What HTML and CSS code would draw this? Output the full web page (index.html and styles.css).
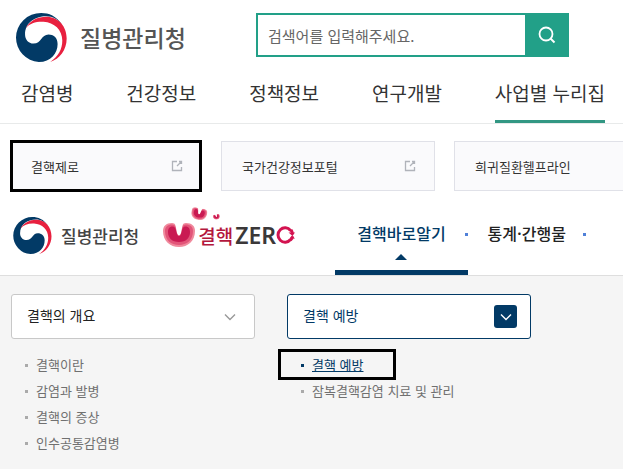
FILE: index.html
```html
<!DOCTYPE html>
<html lang="ko">
<head>
<meta charset="utf-8">
<meta name="viewport" content="width=device-width, initial-scale=1">
<title>질병관리청 결핵제로</title>
<link rel="stylesheet" href="styles.css">
</head>
<body>
<svg class="defs" aria-hidden="true">
  <symbol id="emblem" viewBox="0 0 152 146">
    <path fill="#023a66" d="M138 36C120 8 98 0 75 0A75 73 0 0 0 0 73A73 73 0 0 0 68 146C104 146 124 120 124 92C124 73 111 64 97 64C75 64 76 91 52 91C37 91 27 79 27 64C27 30 56 10 90 10C110 10 125 20 138 36Z"/>
    <path fill="#e8203f" d="M28 46C42 22 65 11 90 11C127 11 151 40 151 76C151 110 130 137 102 146C126 130 138 108 138 82C138 50 114 28 82 26C60 25 42 30 28 46Z"/>
  </symbol>
  <symbol id="lungs" viewBox="0 0 32 24">
    <path fill="#f08a9d" d="M9 0C3 0 0 3 0 8C0 18 7 24 16 24C25 24 32 18 32 8C32 3 29 0 23 0C19 0 17.500 5 17.500 10C17.500 13 14.500 13 14.500 10C14.500 5 13 0 9 0Z"/>
    <path fill="#e25579" d="M9 1.500C4.500 1.500 2 4 2 8C2 17 8 22 16 22C24 22 30 17 30 8C30 4 27.500 1.500 23 1.500C19 1.500 18 6 17.500 11C17 14 15 14 14.500 11C14 6 13 1.500 9 1.500Z"/>
    <path fill="#c91a52" d="M9.500 3.500C6 3.500 5 6 5 9C5 15 9 19 16 19C23 19 27 15 27 9C27 6 26 3.500 22.500 3.500C20 3.500 19 6 18 11C17.500 13.500 14.500 13.500 14 11C13 6 12 3.500 9.500 3.500Z"/>
    <path fill="#fff" d="M12 0H20L18 10Q16 14 14 10Z"/>
  </symbol>
  <symbol id="external" viewBox="0 0 12 12">
    <path fill="none" stroke="#b0b3ba" stroke-width="1.300" d="M6 1.500H1.500V10.500H10.500V7M8 1.500H10.500V4M10.500 1.500L6 6"/>
  </symbol>
  <symbol id="chevron" viewBox="0 0 12 8">
    <path fill="none" stroke="currentColor" stroke-width="1.400" d="M1 1.500L6 6.500L11 1.500"/>
  </symbol>
</svg>

<header class="site-header">
  <div class="site-top">
    <a class="site-logo" href="#"><svg class="site-emblem" aria-hidden="true"><use href="#emblem"/></svg><span>질병관리청</span></a>
    <form class="search" role="search">
      <input class="search-input" type="search" aria-label="검색어" placeholder="검색어를 입력해주세요.">
      <button class="search-button" type="button" aria-label="검색">
        <svg width="18" height="18" viewBox="0 0 18 18" aria-hidden="true"><circle cx="8" cy="8" r="6.500" fill="none" stroke="#fff" stroke-width="1.800"/><path d="M12.500 12.500L16.500 16.500" stroke="#fff" stroke-width="2"/></svg>
      </button>
    </form>
  </div>
  <nav class="site-nav">
    <a href="#">감염병</a>
    <a href="#">건강정보</a>
    <a href="#">정책정보</a>
    <a href="#">연구개발</a>
    <a class="current" href="#">사업별 누리집</a>
  </nav>
</header>

<section class="portals">
  <a class="portal marked" href="#">결핵제로<svg class="external" aria-hidden="true"><use href="#external"/></svg></a>
  <a class="portal" href="#">국가건강정보포털<svg class="external" aria-hidden="true"><use href="#external"/></svg></a>
  <a class="portal trailing" href="#">희귀질환헬프라인</a>
</section>

<header class="tb-header">
  <a class="tb-agency" href="#"><svg class="tb-emblem" aria-hidden="true"><use href="#emblem"/></svg><span>질병관리청</span></a>
  <a class="tb-logo" href="#">
    <svg class="lungs" aria-hidden="true"><use href="#lungs"/></svg>
    <svg class="lungs-small" viewBox="0 0 30 14" aria-hidden="true"><use href="#lungs" width="16" height="12" transform="rotate(12 8 6)"/><use href="#lungs" x="22" y="6" width="7" height="6" transform="rotate(-12 25 9)"/></svg>
    <span class="tb-name">결핵</span><span class="tb-zero">ZER</span>
    <svg class="tb-o" viewBox="0 0 19 18" aria-label="O" role="img"><path fill="none" stroke="#d31350" stroke-width="3" d="M14.500 4.500A7 7.200 0 1 0 14.500 13.500M15 4Q16.500 6 16.500 8M16.500 10.500Q16.500 12.500 14.500 14"/><path fill="#d31350" d="M12.500 6.500H19L16.500 10ZM13.500 12.500L16 9.500L19 12.500Z"/></svg>
  </a>
  <nav class="tb-nav">
    <a class="current" href="#">결핵바로알기</a>
    <a href="#">통계·간행물</a>
  </nav>
</header>

<main class="topics">
  <section class="topic">
    <button class="topic-toggle" type="button" aria-expanded="true"><span class="toggle-label">결핵의 개요</span><span class="toggle-icon"><svg width="12" height="8" aria-hidden="true"><use href="#chevron"/></svg></span></button>
    <ul class="topic-list">
      <li><a href="#">결핵이란</a></li>
      <li><a href="#">감염과 발병</a></li>
      <li><a href="#">결핵의 증상</a></li>
      <li><a href="#">인수공통감염병</a></li>
    </ul>
  </section>
  <section class="topic active">
    <button class="topic-toggle" type="button" aria-expanded="true"><span class="toggle-label">결핵 예방</span><span class="toggle-icon"><svg width="12" height="8" aria-hidden="true"><use href="#chevron"/></svg></span></button>
    <ul class="topic-list">
      <li class="selected"><a href="#">결핵 예방</a></li>
      <li><a href="#">잠복결핵감염 치료 및 관리</a></li>
    </ul>
  </section>
</main>
</body>
</html>
```
FILE: styles.css
```css
*,
*::before,
*::after {
  box-sizing: border-box;
}

body {
  margin: 0;
  min-height: 100vh;
  display: flex;
  flex-direction: column;
  background: #fff;
  color: #333;
  font-family: "Noto Sans CJK KR", sans-serif;
}

a {
  color: inherit;
  text-decoration: none;
}

svg {
  flex: none;
}

.defs {
  position: absolute;
  width: 0;
  height: 0;
}

/* Agency header */
.site-header {
  border-bottom: 1px solid #e8eaea;
}

.site-top {
  display: flex;
  justify-content: space-between;
  align-items: flex-start;
  padding: 13px 54px 0 16px;
}

.site-logo {
  display: flex;
  align-items: center;
  gap: 13px;
  color: #555;
  font-size: 23px;
  font-weight: 500;
  line-height: 49px;
}

.site-emblem {
  width: 51px;
  height: 49px;
}

.search {
  display: flex;
  width: 313px;
  height: 44px;
  border: 2px solid #22a088;
}

.search-input {
  flex: 1;
  min-width: 0;
  padding: 0 10px;
  border: 0;
  background: #fff;
  color: #333;
  font: 15px "Noto Sans CJK KR", sans-serif;
}

.search-input::placeholder {
  color: #666;
}

.search-button {
  display: flex;
  align-items: center;
  justify-content: center;
  width: 42px;
  padding: 0 0 0 2px;
  border: 0;
  background: #22a088;
}

.site-nav {
  display: flex;
  justify-content: space-between;
  padding: 0 18px 0 21px;
}

.site-nav a {
  padding: 17px 0 13px;
  border-bottom: 3px solid transparent;
  font-size: 19px;
  line-height: 28px;
  white-space: nowrap;
}

.site-nav .current {
  border-color: #329783;
}

/* Linked portals */
.portals {
  display: flex;
  align-items: center;
  gap: 19px;
  padding: 16px 0 0 10px;
}

.portal {
  display: flex;
  flex: none;
  align-items: center;
  justify-content: space-between;
  width: 214px;
  height: 50px;
  padding: 0 18px 0 20px;
  border: 1px solid #e0e1e8;
  background: #fafafc;
  color: #333;
  font-size: 13px;
}

.portal.marked {
  width: 192px;
  height: 52px;
  padding: 0 16px 0 18px;
  border: 3px solid #000;
}

.portal.trailing {
  flex: 1;
  width: auto;
  border-right: 0;
}

.external {
  width: 12px;
  height: 12px;
}

/* Tuberculosis site header */
.tb-header {
  display: flex;
  height: 84px;
  padding-left: 13px;
  border-bottom: 1px solid #dedede;
}

.tb-agency,
.tb-logo {
  display: flex;
  align-items: center;
  height: 86px;
  white-space: nowrap;
}

.tb-agency {
  gap: 9px;
  color: #444;
  font-size: 17px;
  font-weight: 500;
}

.tb-emblem {
  width: 39px;
  height: 37px;
}

.tb-logo {
  position: relative;
  margin-left: 24px;
}

.lungs {
  width: 32px;
  height: 24px;
  margin-right: 3px;
}

.lungs-small {
  position: absolute;
  top: 16px;
  left: 28px;
  width: 30px;
  height: 14px;
  overflow: visible;
}

.tb-name {
  margin-right: 2px;
  color: #b3173d;
  font-size: 19px;
  font-weight: 500;
}

.tb-zero {
  color: #3b3839;
  font-family: "Noto Sans", sans-serif;
  font-size: 23px;
  font-weight: 600;
}

.tb-o {
  width: 19px;
  height: 18px;
}

.tb-nav {
  display: flex;
  margin-left: auto;
  padding-right: 37px;
}

.tb-nav a {
  position: relative;
  display: flex;
  justify-content: center;
  padding: 0 20px;
  color: #222;
  font-size: 16px;
  font-weight: 500;
  line-height: 82px;
  white-space: nowrap;
}

.tb-nav a::after {
  content: "";
  position: absolute;
  top: 41px;
  right: 0;
  width: 3px;
  height: 3px;
  background: #5080d8;
}

.tb-nav .current {
  padding: 0 22px;
  border-bottom: 5px solid #023a66;
  color: #023a66;
}

.tb-nav .current::before {
  content: "";
  position: absolute;
  top: 62px;
  border: 6px solid transparent;
  border-top: 0;
  border-bottom-color: #023a66;
}

/* Topic menus */
.topics {
  display: flex;
  flex: 1;
  align-items: flex-start;
  gap: 32px;
  padding: 18px 11px;
  background: #f5f5f5;
}

.topic {
  width: 244px;
}

.topic-toggle {
  display: flex;
  align-items: center;
  justify-content: space-between;
  width: 100%;
  height: 45px;
  padding: 0 13px 0 15px;
  border: 1px solid #c8c8c8;
  border-radius: 3px;
  background: #fff;
  color: #222;
  font: 14px "Noto Sans CJK KR", sans-serif;
}

.toggle-label {
  padding-bottom: 4px;
}

.toggle-icon {
  display: flex;
  align-items: center;
  justify-content: center;
  width: 23px;
  height: 23px;
  border-radius: 3px;
  color: #999;
}

.topic-list {
  margin: 13px 0 0;
  padding: 0 0 0 14px;
  list-style: none;
  color: #707070;
  font-size: 13px;
  line-height: 26px;
}

.topic-list li {
  position: relative;
  display: flex;
  align-items: center;
  gap: 8px;
}

.topic-list li::before {
  content: "";
  width: 3px;
  height: 3px;
  background: #aaa;
}

.active .topic-toggle {
  border-color: #023a66;
  color: #023a66;
}

.active .toggle-icon {
  background: #023a66;
  color: #fff;
}

.topic-list .selected {
  color: #023a66;
}

.topic-list .selected::before {
  background: #023a66;
}

.selected a {
  text-decoration: underline;
}

.selected::after {
  content: "";
  position: absolute;
  top: -3px;
  left: -23px;
  width: 118px;
  height: 31px;
  border: 3px solid #000;
  pointer-events: none;
}
```
